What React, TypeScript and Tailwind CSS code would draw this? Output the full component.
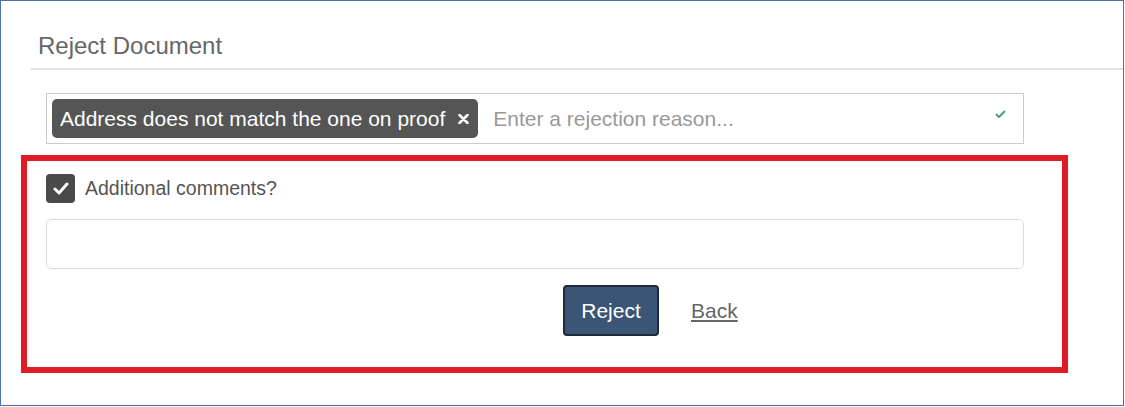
export default function App() {
  return (
    <div className="w-[1124px] h-[406px] bg-white border border-[#4a6fb5] font-['Liberation_Sans',Arial,sans-serif] overflow-hidden">
      <div className="ml-[30px] pt-[33px] pb-[10px] pl-[7px] border-b-2 border-[#e2e2e2]">
        <h1 className="text-[24px] leading-[24px] text-[#666]">Reject Document</h1>
      </div>

      <div className="ml-[45px] mt-[23px] w-[978px] h-[51px] border border-[#ccc] flex items-center pl-[5px] pr-[17px]">
        <span className="h-[39px] rounded-[5px] bg-[#555] text-white text-[21px] flex items-center pl-[8px] pr-[9px] gap-[13px]">
          Address does not match the one on proof
          <svg width="11" height="10" viewBox="0 0 11 10" className="mt-[1px]">
            <path d="M1.5 1 L9.5 9 M9.5 1 L1.5 9" stroke="white" strokeWidth="2.6" strokeLinecap="round" />
          </svg>
        </span>
        <input
          className="flex-1 ml-[15px] text-[21px] text-[#555] placeholder:text-[#999] outline-none bg-transparent"
          placeholder="Enter a rejection reason..."
        />
        <svg width="11" height="8" viewBox="0 0 11 8" className="-mt-[9px]">
          <path d="M1 4 L4 7 L10 1" fill="none" stroke="#4a9e86" strokeWidth="2" />
        </svg>
      </div>

      <div className="ml-[20px] mt-[11px] w-[1047px] h-[218px] border-[6px] border-[#e11b25] pl-[19px] pt-[13px]">
        <label className="flex items-center gap-[10px]">
          <span className="w-[29px] h-[29px] rounded-[4px] bg-[#4a4a4a] flex items-center justify-center">
            <svg width="16" height="13" viewBox="0 0 16 13">
              <path d="M2 7 L6 11 L14 2" fill="none" stroke="white" strokeWidth="3" strokeLinecap="round" strokeLinejoin="round" />
            </svg>
          </span>
          <span className="text-[19.5px] text-[#555]">Additional comments?</span>
        </label>

        <textarea className="block mt-[16px] w-[978px] h-[50px] rounded-[5px] border border-[#dcdcdc] resize-none outline-none" />

        <div className="flex items-center pl-[517px] mt-[16px]">
          <button className="w-[96px] h-[51px] rounded-[4px] bg-[#3b5577] border-2 border-[#1e2a38] text-white text-[21px]">
            Reject
          </button>
          <a href="#" className="ml-[32px] text-[21px] text-[#666] underline">
            Back
          </a>
        </div>
      </div>
    </div>
  );
}
